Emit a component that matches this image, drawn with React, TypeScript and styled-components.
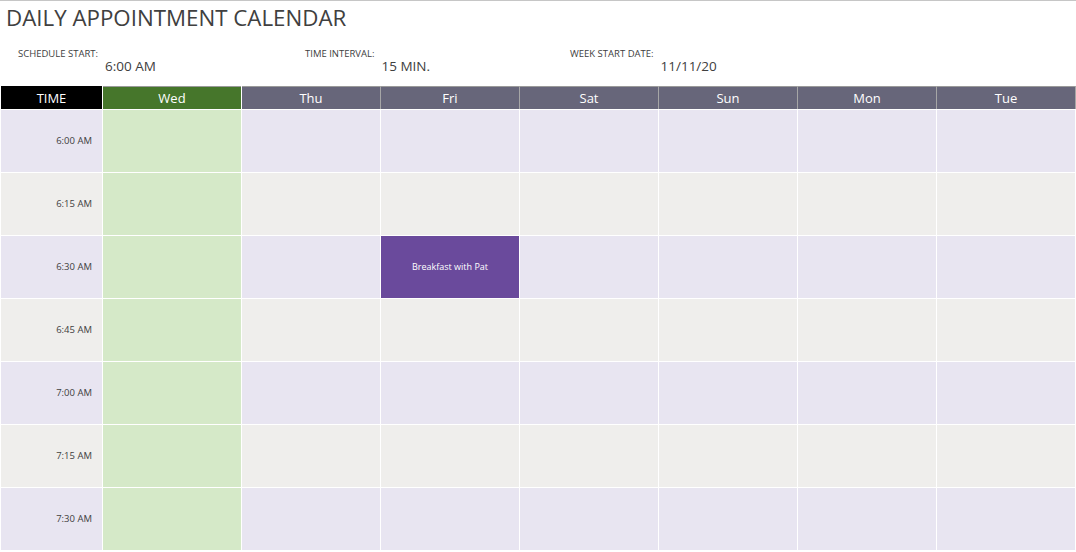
import styled, { createGlobalStyle } from "styled-components";

const GlobalStyle = createGlobalStyle`
  html, body {
    margin: 0;
    padding: 0;
    background: #ffffff;
  }
  body {
    font-family: "Open Sans", "Noto Sans", sans-serif;
    color: #404040;
  }
`;

type Appointment = { day: string; time: string; title: string };

const days = ["Wed", "Thu", "Fri", "Sat", "Sun", "Mon", "Tue"];
const times = ["6:00 AM", "6:15 AM", "6:30 AM", "6:45 AM", "7:00 AM", "7:15 AM", "7:30 AM"];
const appointments: Appointment[] = [
  { day: "Fri", time: "6:30 AM", title: "Breakfast with Pat" },
];

export default function App() {
  return (
    <Page>
      <GlobalStyle />
      <Title>DAILY APPOINTMENT CALENDAR</Title>
      <Settings>
        <Setting>
          <SettingLabel>SCHEDULE START:</SettingLabel>
          <SettingValue>6:00 AM</SettingValue>
        </Setting>
        <Setting>
          <SettingLabel>TIME INTERVAL:</SettingLabel>
          <SettingValue>15 MIN.</SettingValue>
        </Setting>
        <Setting>
          <SettingLabel>WEEK START DATE:</SettingLabel>
          <SettingValue>11/11/20</SettingValue>
        </Setting>
      </Settings>
      <Grid>
        <TimeHead>TIME</TimeHead>
        {days.map((day, i) => (
          <DayHead key={day} $today={i === 0}>
            {day}
          </DayHead>
        ))}
        {times.map((time, r) => (
          <Row key={time} time={time} odd={r % 2 === 0} />
        ))}
      </Grid>
    </Page>
  );
}

function Row({ time, odd }: { time: string; odd: boolean }) {
  return (
    <>
      <TimeCell $odd={odd}>{time}</TimeCell>
      {days.map((day, i) => {
        const appt = appointments.find((a) => a.day === day && a.time === time);
        if (appt) return <EventCell key={day}>{appt.title}</EventCell>;
        return <Cell key={day} $odd={odd} $today={i === 0} />;
      })}
    </>
  );
}

const Page = styled.div`
  width: 1076px;
  height: 552px;
  overflow: hidden;
  border-top: 1px solid #c6c6c6;
  box-sizing: border-box;
`;

const Title = styled.h1`
  margin: 0;
  padding: 2px 0 0 6px;
  font-size: 22.3px;
  font-weight: 400;
  line-height: 30px;
  color: #404040;
`;

const Settings = styled.div`
  display: grid;
  grid-template-columns: 287px 265px auto;
  padding: 14px 0 0 18px;
  height: 42px;
  box-sizing: border-box;
`;

const Setting = styled.div`
  display: flex;
  align-items: flex-start;
  gap: 7px;
`;

const SettingLabel = styled.span`
  font-size: 9.5px;
  line-height: 13px;
  color: #404040;
`;

const SettingValue = styled.span`
  font-size: 13.5px;
  line-height: 16px;
  margin-top: 11px;
  color: #404040;
`;

const Grid = styled.div`
  display: grid;
  grid-template-columns: 101px repeat(7, 138px);
  grid-template-rows: 23px repeat(7, 62px);
  gap: 1px;
  padding: 11px 0 0 1px;
  background: #ffffff;
`;

const HeadBase = styled.div`
  display: flex;
  align-items: center;
  justify-content: center;
  font-size: 13px;
  color: #ffffff;
  border-top: 1px solid #9a9a9a;
  box-sizing: border-box;
`;

const TimeHead = styled(HeadBase)`
  background: #000000;
  border-top-color: #000000;
`;

const DayHead = styled(HeadBase)<{ $today: boolean }>`
  background: ${(p) => (p.$today ? "#46762b" : "#67667a")};
  box-shadow: 1px 0 0 ${(p) => (p.$today ? "#ffffff" : "#a6a6a6")};
`;

const TimeCell = styled.div<{ $odd: boolean }>`
  display: flex;
  align-items: center;
  justify-content: flex-end;
  padding: 0 10px 2px 0;
  font-size: 9.5px;
  color: #404040;
  background: ${(p) => (p.$odd ? "#e8e5f1" : "#efeeec")};
`;

const Cell = styled.div<{ $odd: boolean; $today: boolean }>`
  background: ${(p) =>
    p.$today ? "#d5e9c8" : p.$odd ? "#e8e5f1" : "#efeeec"};
`;

const EventCell = styled.div`
  display: flex;
  align-items: center;
  justify-content: center;
  background: #6a4a9c;
  color: #ffffff;
  font-size: 9px;
  padding-bottom: 2px;
`;
